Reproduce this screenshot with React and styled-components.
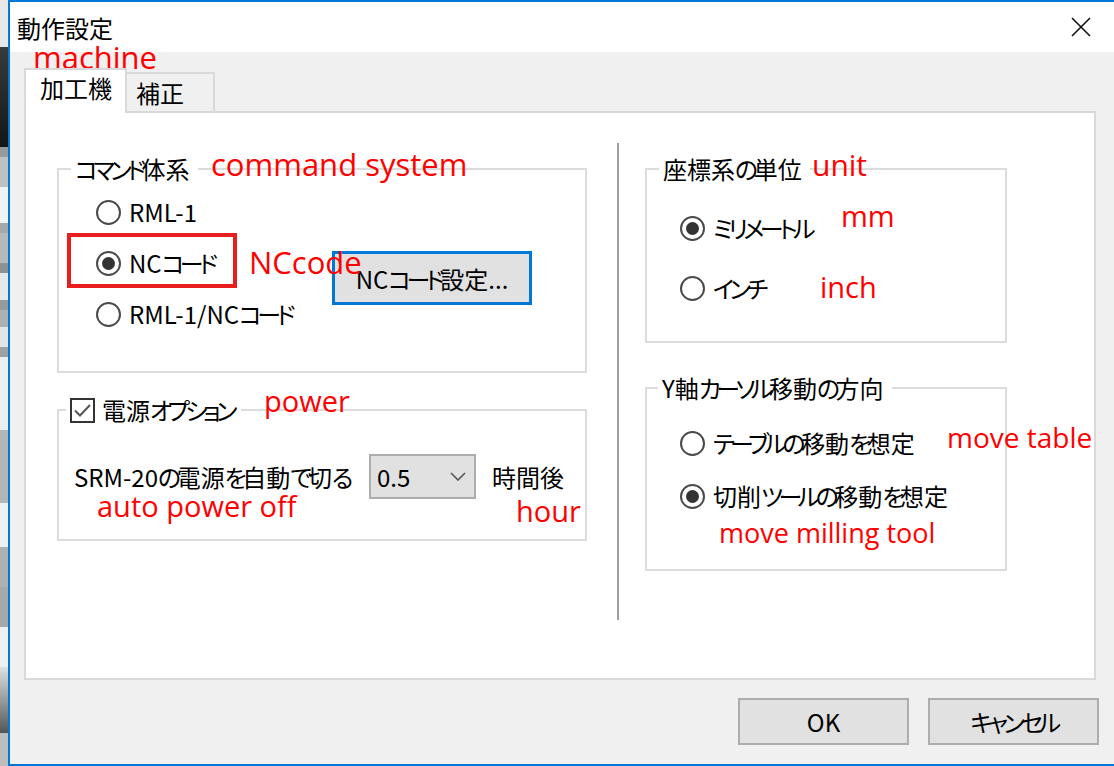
import React from "react";
import styled, { createGlobalStyle } from "styled-components";

const GlobalStyle = createGlobalStyle`
  html, body {
    margin: 0;
    padding: 0;
    width: 1114px;
    height: 766px;
    overflow: hidden;
    background: #f0f0f0;
  }
  body {
    font-family: "Noto Sans CJK JP", "Noto Sans", sans-serif;
    font-feature-settings: "palt" 1;
    color: #000;
  }
`;

// 뒤에 깔린 다른 창 (왼쪽 8px만 보임)
const backBands = [
  [47, "#e8e8e8"],
  [100, "linear-gradient(#3a3a3a, #161616)"],
  [10, "#999"],
  [30, "#c0c0c0"],
  [36, "#f2f2f2"],
  [10, "#a8a8a8"],
  [30, "#b8b8b8"],
  [10, "#909090"],
  [27, "#e8e8e8"],
  [10, "#999"],
  [17, "#b0b0b0"],
  [20, "#e4e4e4"],
  [10, "#a0a0a0"],
  [73, "#eeeeee"],
  [73, "#b5b5b5"],
  [44, "#f0f0f0"],
  [40, "#b0b0b0"],
  [40, "#a8a8a8"],
  [40, "#f0f0f0"],
  [66, "linear-gradient(#e0e0e0, #555)"],
  [40, "#bdbdbd"],
];

const Screen = styled.div`
  position: relative;
  display: flex;
  width: 1114px;
  height: 766px;
  overflow: hidden;
`;

const BackWindow = styled.div`
  flex: none;
  width: 8px;
  display: flex;
  flex-direction: column;
  overflow: hidden;
`;

const Band = styled.div`
  flex: none;
  height: ${({ $h }) => $h}px;
  background: ${({ $bg }) => $bg};
`;

const Dialog = styled.div`
  flex: none;
  width: 1106px;
  height: 766px;
  box-sizing: border-box;
  border: 2px solid #0078d7;
  border-right: none;
  background: #f0f0f0;
  display: flex;
  flex-direction: column;
`;

const TitleBar = styled.div`
  flex: none;
  height: 50px;
  background: #fff;
  display: flex;
  align-items: center;
  justify-content: space-between;
  padding: 0 23px 0 7px;
  font-size: 24px;
`;

const CloseIcon = () => (
  <svg width="20" height="20" viewBox="0 0 20 20">
    <path d="M1 1 L19 19 M19 1 L1 19" stroke="#111" strokeWidth="1.6" />
  </svg>
);

// 메이리오UI는 가나가 좁아서 가나만 자간을 줄임
const Kana = styled.span`
  letter-spacing: -4.5px;
`;

const Jp = ({ children }) => (
  <span>
    {children.split(/([\u3041-\u30ff]+)/).map((part, i) =>
      /[\u3041-\u30ff]/.test(part) ? <Kana key={i}>{part}</Kana> : part
    )}
  </span>
);

const Body = styled.div`
  padding: 16px 18px 0 14px;
  display: flex;
  flex-direction: column;
`;

const TabStrip = styled.div`
  display: flex;
  align-items: flex-end;
  height: 45px;
  margin-bottom: -2px;
  position: relative;
  z-index: 1;
`;

const Tab = styled.div`
  box-sizing: border-box;
  border: 2px solid #d9d9d9;
  border-bottom: none;
  font-size: 24px;
  line-height: 30px;
  background: ${({ $active }) => ($active ? "#fff" : "#f0f0f0")};
  height: ${({ $active }) => ($active ? 45 : 39)}px;
  width: ${({ $w }) => $w}px;
  padding: ${({ $active }) => ($active ? "3px 0 0 14px" : "4px 0 0 9px")};
  align-self: ${({ $active }) => ($active ? "flex-end" : "flex-start")};
  margin-top: ${({ $active }) => ($active ? 0 : 4)}px;
  margin-left: ${({ $active }) => ($active ? 0 : -2)}px;
`;

const Panel = styled.div`
  box-sizing: border-box;
  width: 1072px;
  height: 569px;
  background: #fff;
  border: 2px solid #d9d9d9;
  display: flex;
  align-items: flex-start;
  padding: 30px 0 0 31px;
`;

const Column = styled.div`
  flex: none;
  width: ${({ $w }) => $w}px;
  padding-top: 11px;
  display: flex;
  flex-direction: column;
  gap: ${({ $gap }) => $gap}px;
`;

const Separator = styled.div`
  flex: none;
  width: 2px;
  height: 477px;
  background: #a0a0a0;
  margin: 0 26px 0 30px;
`;

const Group = styled.fieldset`
  box-sizing: border-box;
  margin: 0;
  padding: 0;
  min-width: 0;
  height: ${({ $h }) => $h}px;
  border: 2px solid #dcdcdc;
`;

const Legend = styled.legend`
  margin-left: ${({ $ml }) => $ml}px;
  padding: 0 8px 0 4px;
  font-size: 24px;
  line-height: 30px;
  display: flex;
  align-items: center;
  gap: 7px;
`;

const GroupBody = styled.div`
  display: flex;
  align-items: ${({ $align }) => $align || "flex-start"};
  padding: ${({ $pad }) => $pad};
`;

const OptionList = styled.div`
  flex: none;
  width: ${({ $w }) => ($w ? `${$w}px` : "auto")};
  display: flex;
  flex-direction: column;
  gap: ${({ $gap }) => $gap}px;
`;

const OptionRow = styled.div`
  position: relative;
  display: flex;
  align-items: center;
  gap: 8px;
  height: 30px;
  font-size: 24px;
  line-height: 30px;
  white-space: nowrap;
`;

const RadioCircle = styled.span`
  flex: none;
  box-sizing: border-box;
  width: 25px;
  height: 25px;
  border-radius: 50%;
  border: 2px solid #4a4a4a;
  background: #fff;
  display: flex;
  align-items: center;
  justify-content: center;

  &::after {
    content: "";
    width: 13px;
    height: 13px;
    border-radius: 50%;
    background: #333;
    display: ${({ $checked }) => ($checked ? "block" : "none")};
  }
`;

const CheckBox = styled.span`
  flex: none;
  box-sizing: border-box;
  width: 25px;
  height: 25px;
  border: 2px solid #333;
  background: #fff;
  display: flex;
  align-items: center;
  justify-content: center;
`;

const Highlight = styled.div`
  position: absolute;
  left: -29px;
  top: -15px;
  width: 170px;
  height: 55px;
  box-sizing: border-box;
  border: 4px solid #e81e1e;
  pointer-events: none;
`;

const SettingsButton = styled.div`
  flex: none;
  box-sizing: border-box;
  width: 200px;
  height: 54px;
  margin-top: 54px;
  border: 3px solid #0078d7;
  background: #e1e1e1;
  font-size: 24px;
  display: flex;
  align-items: center;
  justify-content: center;
`;

const Label = styled.span`
  font-size: 24px;
  line-height: 30px;
  white-space: nowrap;
`;

const Combo = styled.div`
  flex: none;
  box-sizing: border-box;
  width: 107px;
  height: 45px;
  margin: 0 16px 0 20px;
  border: 2px solid #adadad;
  background: #e1e1e1;
  display: flex;
  align-items: center;
  justify-content: space-between;
  padding: 0 8px 0 6px;
  font-size: 24px;
`;

const Footer = styled.div`
  display: flex;
  justify-content: flex-end;
  gap: 19px;
  padding-top: 18px;
  margin-right: -3px;
`;

const DialogButton = styled.div`
  box-sizing: border-box;
  width: 171px;
  height: 47px;
  border: 2px solid #adadad;
  background: #e1e1e1;
  font-size: 24px;
  display: flex;
  align-items: center;
  justify-content: center;
`;

// 빨간 주석 글씨 (스크린샷 위에 써놓은 것)
const Note = styled.div`
  position: absolute;
  left: ${({ $x }) => $x}px;
  top: ${({ $base, $size }) => $base - $size * 0.888}px;
  font-family: "Open Sans", "Noto Sans", sans-serif;
  font-size: ${({ $size }) => $size}px;
  line-height: 1;
  color: #ff0000;
  white-space: nowrap;
  pointer-events: none;
`;

const notes = [
  { text: "machine", x: 33, base: 70, size: 31 },
  { text: "command system", x: 211, base: 177, size: 31 },
  { text: "NCcode", x: 249, base: 275, size: 31 },
  { text: "unit", x: 812, base: 177, size: 30 },
  { text: "mm", x: 841, base: 227, size: 29 },
  { text: "inch", x: 820, base: 298, size: 29 },
  { text: "power", x: 264, base: 412, size: 29 },
  { text: "auto power off", x: 97, base: 517, size: 29 },
  { text: "hour", x: 516, base: 522, size: 29 },
  { text: "move table", x: 947, base: 448, size: 28 },
  { text: "move milling tool", x: 719, base: 543, size: 27 },
];

const Radio = ({ checked, children, highlight }) => (
  <OptionRow>
    {highlight && <Highlight />}
    <RadioCircle $checked={checked} />
    <Jp>{children}</Jp>
  </OptionRow>
);

const Chevron = () => (
  <svg width="16" height="9" viewBox="0 0 16 9">
    <polyline points="1,1 8,8 15,1" fill="none" stroke="#555" strokeWidth="1.6" />
  </svg>
);

const Check = () => (
  <svg width="19" height="19" viewBox="0 0 19 19">
    <polyline points="2,9.5 7,14.5 17,4" fill="none" stroke="#555" strokeWidth="2" />
  </svg>
);

export default function App() {
  return (
    <Screen>
      <GlobalStyle />
      <BackWindow>
        {backBands.map(([h, bg], i) => (
          <Band key={i} $h={h} $bg={bg} />
        ))}
      </BackWindow>
      <Dialog>
        <TitleBar>
          <span>動作設定</span>
          <CloseIcon />
        </TitleBar>
        <Body>
          <TabStrip>
            <Tab $active $w={103}>加工機</Tab>
            <Tab $w={90}>補正</Tab>
          </TabStrip>
          <Panel>
            <Column $w={530} $gap={22}>
              <Group $h={219}>
                <Legend $ml={12}>
                  <Jp>コマンド体系</Jp>
                </Legend>
                <GroupBody $pad="13px 0 0 37px">
                  <OptionList $w={236} $gap={21}>
                    <Radio>RML-1</Radio>
                    <Radio checked highlight>NCコード</Radio>
                    <Radio>RML-1/NCコード</Radio>
                  </OptionList>
                  <SettingsButton>
                    <Jp>NCコード設定...</Jp>
                  </SettingsButton>
                </GroupBody>
              </Group>
              <Group $h={146}>
                <Legend $ml={7}>
                  <CheckBox>
                    <Check />
                  </CheckBox>
                  <Jp>電源オプション</Jp>
                </Legend>
                <GroupBody $align="center" $pad="29px 0 0 15px">
                  <Label>
                    <Jp>SRM-20の電源を自動で切る</Jp>
                  </Label>
                  <Combo>
                    <span>0.5</span>
                    <Chevron />
                  </Combo>
                  <Label>時間後</Label>
                </GroupBody>
              </Group>
            </Column>
            <Separator />
            <Column $w={362} $gap={30}>
              <Group $h={189}>
                <Legend $ml={12}>
                  <Jp>座標系の単位</Jp>
                </Legend>
                <GroupBody $pad="29px 0 0 33px">
                  <OptionList $gap={30}>
                    <Radio checked>ミリメートル</Radio>
                    <Radio>インチ</Radio>
                  </OptionList>
                </GroupBody>
              </Group>
              <Group $h={198}>
                <Legend $ml={11}>
                  <Jp>Y軸カーソル移動の方向</Jp>
                </Legend>
                <GroupBody $pad="25px 0 0 33px">
                  <OptionList $gap={23}>
                    <Radio>テーブルの移動を想定</Radio>
                    <Radio checked>切削ツールの移動を想定</Radio>
                  </OptionList>
                </GroupBody>
              </Group>
            </Column>
          </Panel>
          <Footer>
            <DialogButton>OK</DialogButton>
            <DialogButton>
              <Jp>キャンセル</Jp>
            </DialogButton>
          </Footer>
        </Body>
      </Dialog>
      {notes.map((n) => (
        <Note key={n.text} $x={n.x} $base={n.base} $size={n.size}>
          {n.text}
        </Note>
      ))}
    </Screen>
  );
}
